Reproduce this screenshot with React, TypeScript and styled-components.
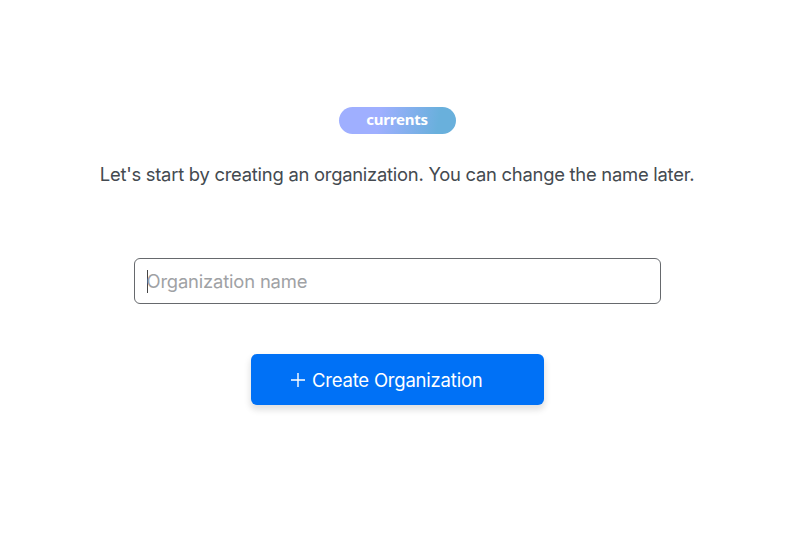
import React from "react";
import styled, { createGlobalStyle } from "styled-components";

const GlobalStyle = createGlobalStyle`
  * { box-sizing: border-box; }
  body { margin: 0; background: #fff; font-family: Inter, "Liberation Sans", sans-serif; }
`;

const Page = styled.main`
  width: 794px;
  height: 552px;
  padding-top: 106.5px;
  display: flex;
  flex-direction: column;
  align-items: center;
`;

const Brand = styled.div`
  width: 117px;
  height: 27px;
  border-radius: 14px;
  background: linear-gradient(100deg, #9fafff 34%, #69b0dc 84%);
  color: #fff;
  font: 700 15px/24.5px "Noto Sans", sans-serif;
  letter-spacing: -0.2px;
  text-align: center;
`;

const Intro = styled.p`
  margin: 28.5px 0 0;
  height: 24px;
  font-size: 18.4px;
  line-height: 24px;
  letter-spacing: -0.25px;
  color: #444a50;
  white-space: nowrap;
`;

const Field = styled.div`
  width: 527px;
  height: 46px;
  margin-top: 72px;
  padding-left: 12px;
  display: flex;
  align-items: center;
  border: 1px solid #66696d;
  border-radius: 6px;
`;

const Caret = styled.span`
  width: 1px;
  height: 23px;
  margin-right: -1px;
  background: #444;
`;

const Placeholder = styled.span`
  font-size: 18.4px;
  letter-spacing: -0.17px;
  color: #9fa2a5;
`;

const Button = styled.button`
  width: 293px;
  height: 51px;
  margin-top: 50px;
  padding: 0 0 0 39.5px;
  display: flex;
  align-items: center;
  gap: 6px;
  border: 0;
  border-radius: 6px;
  background: #0071f6;
  box-shadow: 0 4px 6px 1px rgba(0, 0, 0, 0.12);
  color: #fff;
  font: 400 18.5px/24px Inter, sans-serif;
  letter-spacing: -0.21px;
  white-space: nowrap;
`;

export default function App() {
  return (
    <Page>
      <GlobalStyle />
      <Brand>currents</Brand>
      <Intro>Let's start by creating an organization. You can change the name later.</Intro>
      <Field>
        <Caret />
        <Placeholder>Organization name</Placeholder>
      </Field>
      <Button>
        <svg width="16" height="16" viewBox="0 0 16 16" fill="none" stroke="#fff" strokeWidth="1.4">
          <path d="M8 1v14M1 8h14" />
        </svg>
        <span>Create Organization</span>
      </Button>
    </Page>
  );
}
